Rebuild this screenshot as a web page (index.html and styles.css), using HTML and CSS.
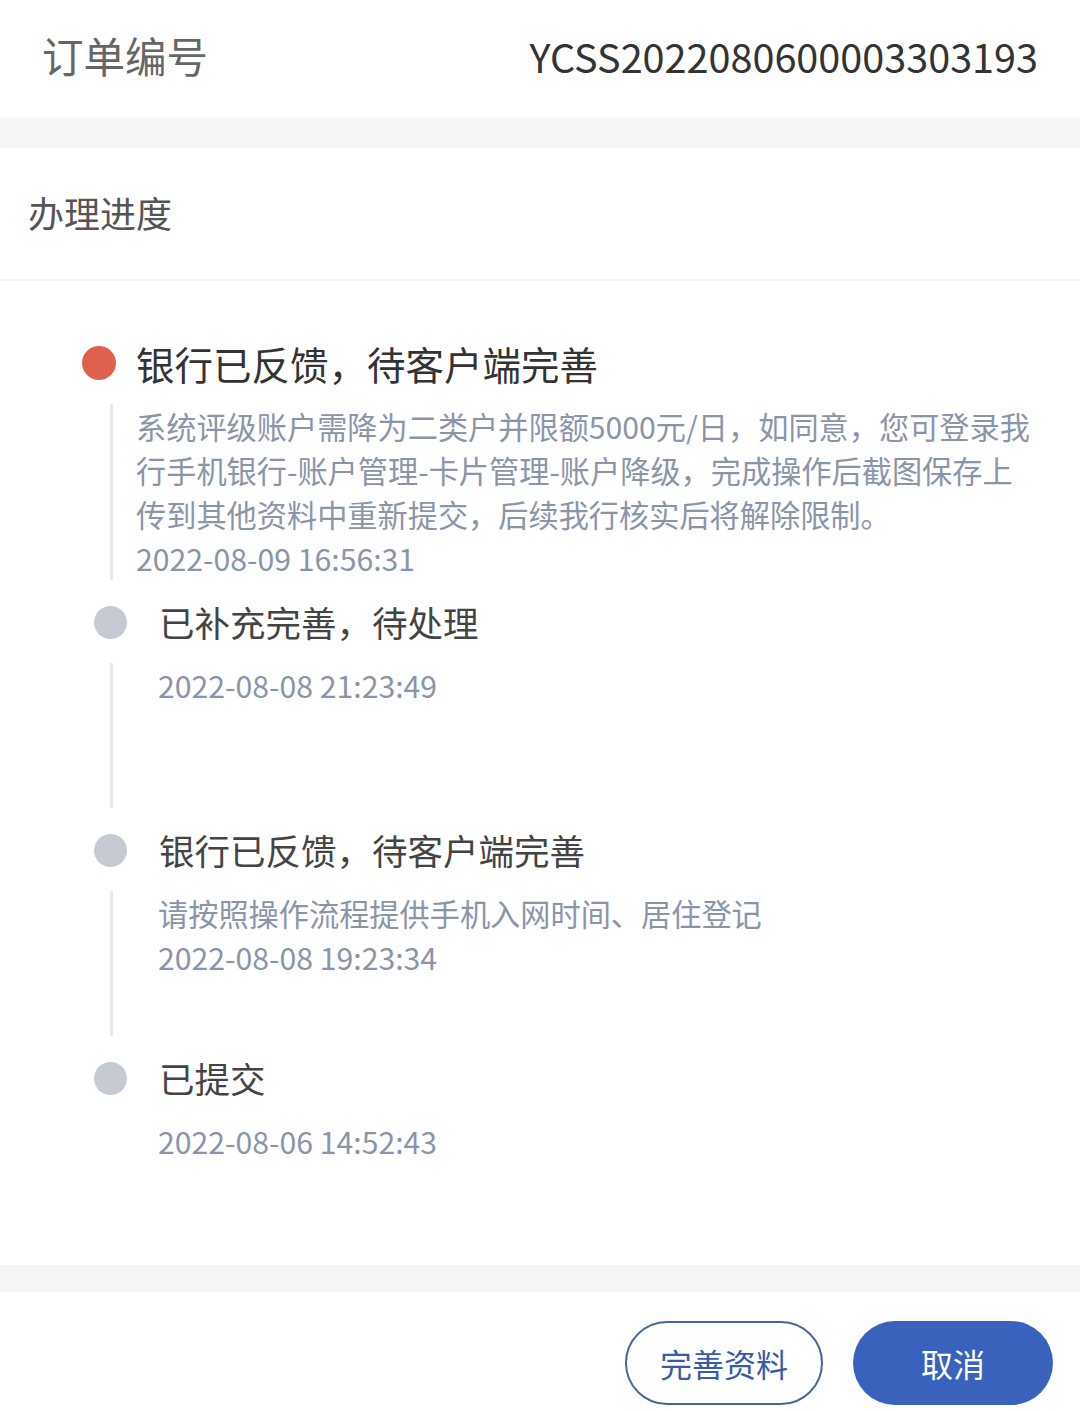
FILE: index.html
```html
<!DOCTYPE html>
<html lang="zh-CN">
<head>
<meta charset="utf-8">
<title>订单详情</title>
<link rel="stylesheet" href="styles.css">
</head>
<body>
<div class="page">
  <div class="order-row">
    <span class="order-label">订单编号</span>
    <span class="order-value">YCSS2022080600003303193</span>
  </div>
  <div class="band"></div>
  <div class="section-head">办理进度</div>
  <div class="timeline">
    <div class="item item-active">
      <div class="item-head">
        <span class="dot"></span>
        <span class="title">银行已反馈，待客户端完善</span>
      </div>
      <div class="item-body">
        <div class="desc">系统评级账户需降为二类户并限额5000元/日，如同意，您可登录我行手机银行-账户管理-卡片管理-账户降级，完成操作后截图保存上传到其他资料中重新提交，后续我行核实后将解除限制。</div>
        <div class="time">2022-08-09 16:56:31</div>
      </div>
    </div>
    <div class="item">
      <div class="item-head">
        <span class="dot"></span>
        <span class="title">已补充完善，待处理</span>
      </div>
      <div class="item-body">
        <div class="time">2022-08-08 21:23:49</div>
      </div>
    </div>
    <div class="item">
      <div class="item-head">
        <span class="dot"></span>
        <span class="title">银行已反馈，待客户端完善</span>
      </div>
      <div class="item-body">
        <div class="desc">请按照操作流程提供手机入网时间、居住登记</div>
        <div class="time">2022-08-08 19:23:34</div>
      </div>
    </div>
    <div class="item item-last">
      <div class="item-head">
        <span class="dot"></span>
        <span class="title">已提交</span>
      </div>
      <div class="item-body">
        <div class="time">2022-08-06 14:52:43</div>
      </div>
    </div>
  </div>
  <div class="band band-bottom"></div>
  <div class="footer">
    <button class="btn btn-outline">完善资料</button>
    <button class="btn btn-primary">取消</button>
  </div>
</div>
</body>
</html>
```

FILE: styles.css
```css
html, body {
  margin: 0;
  padding: 0;
  background: #ffffff;
}

body {
  font-family: "Noto Sans CJK SC", "Noto Sans", sans-serif;
  color: #333333;
}

.page {
  width: 1080px;
  min-height: 1411px;
  display: flex;
  flex-direction: column;
  background: #ffffff;
}

.order-row {
  height: 118px;
  display: flex;
  align-items: center;
  justify-content: space-between;
  padding: 0 42px 6px 42px;
  box-sizing: border-box;
}

.order-label {
  font-size: 41.5px;
  color: #666666;
  line-height: 1;
}

.order-value {
  font-size: 39.6px;
  color: #333333;
  line-height: 1;
}

.band {
  height: 30px;
  background: #f5f5f5;
}

.band-bottom {
  height: 27px;
}

.section-head {
  height: 133px;
  display: flex;
  align-items: center;
  padding: 0 0 4px 28px;
  box-sizing: border-box;
  font-size: 36px;
  color: #555555;
  border-bottom: 2px solid #f3f3f3;
}

.timeline {
  padding: 56px 50px 1px 0;
  display: flex;
  flex-direction: column;
  gap: 16px;
}

.item-head {
  display: flex;
  align-items: center;
  height: 52px;
  gap: 32px;
  padding-left: 94px;
}

.dot {
  width: 33px;
  height: 33px;
  border-radius: 50%;
  background: #c5cad3;
  flex: none;
}

.title {
  font-size: 35.5px;
  line-height: 52px;
  color: #444444;
}

.item-body {
  margin: 15px 0 0 110px;
  border-left: 3px solid #e8e8e8;
  padding-left: 45px;
  min-height: 145px;
  box-sizing: border-box;
}

.item-last .item-body {
  border-left-color: transparent;
}

.item-active .item-head {
  padding-left: 82px;
  gap: 20px;
}

.item-active .dot {
  width: 34px;
  height: 34px;
  background: #e06050;
}

.item-active .title {
  font-size: 38.5px;
  color: #333333;
}

.item-active .item-body {
  padding-left: 23px;
}

.desc,
.time {
  font-size: 30.2px;
  line-height: 44px;
  color: #8a95aa;
}

.footer {
  display: flex;
  justify-content: flex-end;
  gap: 30px;
  padding: 29px 27px 0 0;
}

.btn {
  height: 84px;
  border-radius: 42px;
  font-family: "Noto Sans CJK SC", "Noto Sans", sans-serif;
  font-size: 32px;
  padding: 0;
  box-sizing: border-box;
}

.btn-outline {
  width: 198px;
  background: #ffffff;
  border: 2px solid #4a6796;
  color: #3a5ca8;
}

.btn-primary {
  width: 200px;
  background: #3a62bc;
  border: none;
  color: #ffffff;
}
```
